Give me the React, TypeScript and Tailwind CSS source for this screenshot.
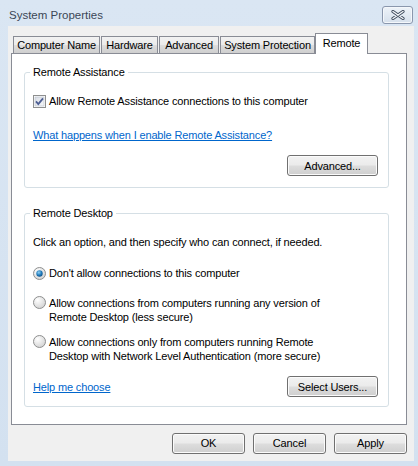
import React from "react";

const font = { fontFamily: '"Liberation Sans", Arial, sans-serif' };

function Btn({ children, w }: { children: React.ReactNode; w: string }) {
  return (
    <div
      className={`${w} h-[21px] flex items-center justify-center rounded-[3px] border border-[#707070] bg-[linear-gradient(#f2f2f2_0%,#ebebeb_48%,#dddddd_52%,#cfcfcf_100%)] shadow-[inset_0_0_0_1px_#fbfbfb] text-[11px] tracking-[-0.15px] text-black whitespace-nowrap`}
    >
      {children}
    </div>
  );
}

function Tab({ label, w, selected }: { label: string; w: string; selected?: boolean }) {
  if (selected) {
    return (
      <div
        className={`${w} h-[21px] -mb-[1px] relative z-10 flex items-center justify-center border border-b-0 border-[#898c95] bg-white text-[11px] tracking-[-0.15px] text-black whitespace-nowrap`}
      >
        <span className="-mt-[1px]">{label}</span>
      </div>
    );
  }
  return (
    <div
      className={`${w} h-[17px] flex items-center justify-center border border-b-0 border-[#898c95] bg-[linear-gradient(#f2f2f2_0%,#ebebeb_48%,#dddddd_52%,#cfcfcf_100%)] text-[11px] tracking-[-0.15px] text-black whitespace-nowrap`}
    >
      {label}
    </div>
  );
}

function Radio({ checked }: { checked?: boolean }) {
  return (
    <svg width="13" height="13" viewBox="0 0 13 13" className="shrink-0">
      <defs>
        <radialGradient id="rg" cx="0.35" cy="0.3" r="0.8">
          <stop offset="0" stopColor="#ffffff" />
          <stop offset="1" stopColor="#cfcfcf" />
        </radialGradient>
        <radialGradient id="dot" cx="0.4" cy="0.35" r="0.7">
          <stop offset="0" stopColor="#8fd2f7" />
          <stop offset="0.6" stopColor="#1e78b8" />
          <stop offset="1" stopColor="#0e4f86" />
        </radialGradient>
      </defs>
      <circle cx="6.5" cy="6.5" r="6" fill="url(#rg)" stroke="#8e8f8f" strokeWidth="1" />
      {checked && <circle cx="6.5" cy="6.5" r="3.2" fill="url(#dot)" />}
    </svg>
  );
}

function Checkbox() {
  return (
    <svg width="13" height="13" viewBox="0 0 13 13" className="shrink-0">
      <defs>
        <linearGradient id="cb" x1="0" y1="0" x2="1" y2="1">
          <stop offset="0" stopColor="#d9dee6" />
          <stop offset="1" stopColor="#f6f7f9" />
        </linearGradient>
      </defs>
      <rect x="0.5" y="0.5" width="12" height="12" fill="#ffffff" stroke="#8e8f8f" />
      <rect x="2" y="2" width="9" height="9" fill="url(#cb)" stroke="#b7bec9" strokeWidth="0.6" />
      <path d="M3 6.4 L5.3 9 L10 3.4" fill="none" stroke="#4d5e93" strokeWidth="1.8" />
    </svg>
  );
}

function Group({ title, children, className }: { title: string; children: React.ReactNode; className?: string }) {
  return (
    <div className={`relative border border-[#d5dfe5] rounded-[3px] ${className ?? ""}`}>
      <span className="absolute -top-[8px] left-[5px] px-[3px] bg-white leading-[14px] text-black">
        {title}
      </span>
      {children}
    </div>
  );
}

export default function App() {
  return (
    <div
      className="w-[418px] h-[466px] flex flex-col bg-[linear-gradient(#dae6f3,#d3e1f0)] overflow-hidden"
      style={font}
    >
      {/* title bar */}
      <div className="h-[26px] flex items-start justify-between pl-[9px] pr-[5px]">
        <span className="mt-[7px] text-[11.5px] leading-[16px] text-[#3b4656]">System Properties</span>
        <div className="mt-[6px] w-[31px] h-[18px] rounded-[3px] border border-[#8a97ad] bg-[linear-gradient(#eef3f9,#d6e0ec)] shadow-[inset_0_0_0_1px_#f4f7fb] flex items-center justify-center">
          <svg width="14" height="10" viewBox="0 0 14 10">
            <path d="M2 1.5 L12 8.5 M12 1.5 L2 8.5" stroke="#3d4a5c" strokeWidth="3.2" strokeLinecap="round" />
            <path d="M2 1.5 L12 8.5 M12 1.5 L2 8.5" stroke="#f6f8fb" strokeWidth="1.4" strokeLinecap="round" />
          </svg>
        </div>
      </div>

      {/* client area */}
      <div className="flex-1 ml-[8px] mr-[4px] mb-[5px] bg-[#f0f0f0] flex flex-col pt-[7px] pl-[3px] pr-[7px]">
        {/* tabs */}
        <div className="h-[20px] flex items-end pl-[2px] gap-[1px]">
          <Tab label="Computer Name" w="w-[87px]" />
          <Tab label="Hardware" w="w-[57px]" />
          <Tab label="Advanced" w="w-[60px]" />
          <Tab label="System Protection" w="w-[95px]" />
          <div className="-ml-[1px]">
            <Tab label="Remote" w="w-[53px]" selected />
          </div>
        </div>

        {/* panel */}
        <div className="h-[372px] border border-[#898c95] bg-white pt-[18px] pl-[12px] pr-[17px] text-[11px] tracking-[-0.15px] leading-[14px] text-black">
          <Group title="Remote Assistance" className="pl-[8px] pr-[10px] pt-[21px] pb-[11px]">
            <div className="flex items-center gap-[3px] h-[14px]">
              <Checkbox />
              <span>Allow Remote Assistance connections to this computer</span>
            </div>
            <div className="mt-[20px] h-[14px]">
              <span className="text-[#0066cc] underline">What happens when I enable Remote Assistance?</span>
            </div>
            <div className="mt-[13px] flex justify-end">
              <Btn w="w-[91px]">Advanced...</Btn>
            </div>
          </Group>

          <Group title="Remote Desktop" className="mt-[25px] pl-[8px] pr-[10px] pt-[21px] pb-[9px]">
            <div className="h-[14px]">Click an option, and then specify who can connect, if needed.</div>
            <div className="mt-[17px] flex items-center gap-[3px] h-[14px]">
              <Radio checked />
              <span>Don't allow connections to this computer</span>
            </div>
            <div className="mt-[16px] flex items-start gap-[3px]">
              <Radio />
              <span>
                Allow connections from computers running any version of
                <br />
                Remote Desktop (less secure)
              </span>
            </div>
            <div className="mt-[11px] flex items-start gap-[3px]">
              <Radio />
              <span>
                Allow connections only from computers running Remote
                <br />
                Desktop with Network Level Authentication (more secure)
              </span>
            </div>
            <div className="mt-[13px] flex items-center justify-between">
              <span className="text-[#0066cc] underline">Help me choose</span>
              <Btn w="w-[91px]">Select Users...</Btn>
            </div>
          </Group>
        </div>

        {/* bottom buttons */}
        <div className="mt-[8px] flex justify-end gap-[8px]">
          <Btn w="w-[73px]">OK</Btn>
          <Btn w="w-[73px]">Cancel</Btn>
          <Btn w="w-[73px]">Apply</Btn>
        </div>
      </div>
    </div>
  );
}
